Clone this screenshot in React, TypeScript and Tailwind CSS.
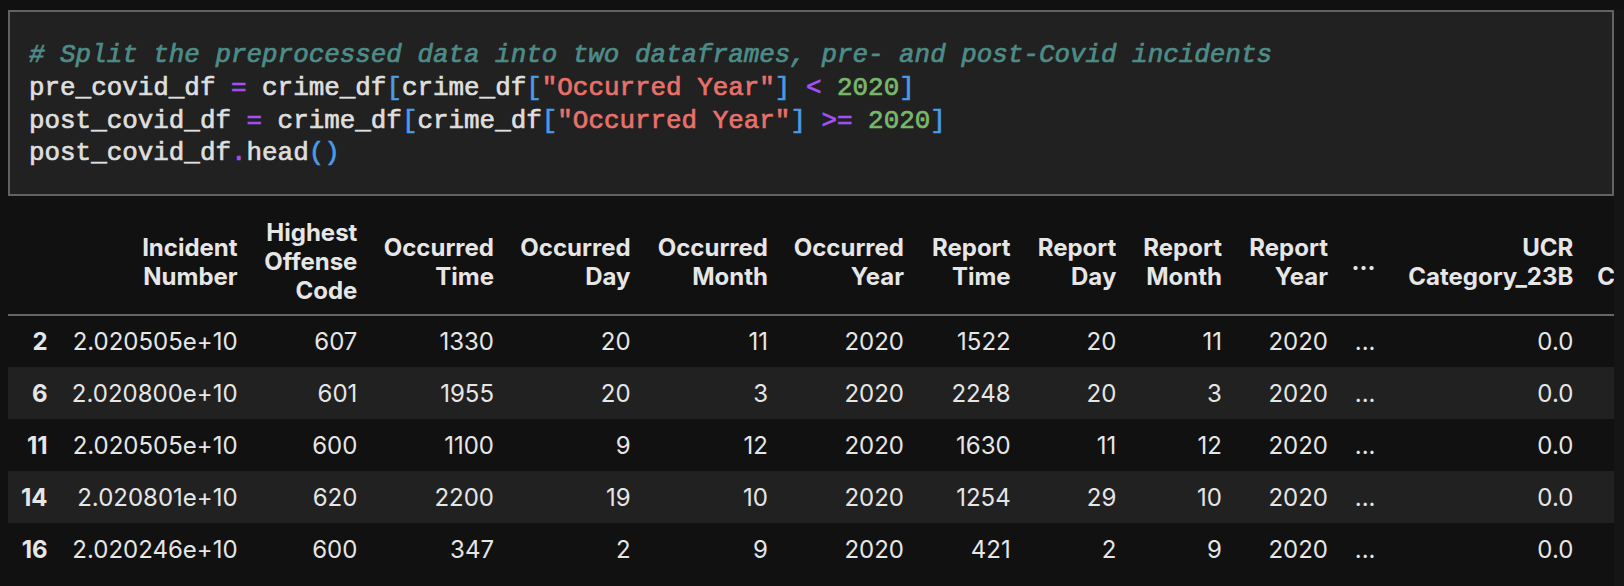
import React from "react"

const P = ({ children }: { children: React.ReactNode }) => (
  <span className="text-[#a450f2]">{children}</span>
)
const B = ({ children }: { children: React.ReactNode }) => (
  <span className="text-[#4b9be6]">{children}</span>
)
const S = ({ children }: { children: React.ReactNode }) => (
  <span className="text-[#e8716a]">{children}</span>
)
const N = ({ children }: { children: React.ReactNode }) => (
  <span className="text-[#79b86b]">{children}</span>
)

// column widths (px), cells are right aligned with 12px right padding
const widths = [51.6, 190, 119.8, 136.6, 136.6, 137.4, 136, 106.7, 105.7, 105.6, 106, 47.6, 197.8, 195]

const headers: string[][] = [
  [],
  ["Incident", "Number"],
  ["Highest", "Offense", "Code"],
  ["Occurred", "Time"],
  ["Occurred", "Day"],
  ["Occurred", "Month"],
  ["Occurred", "Year"],
  ["Report", "Time"],
  ["Report", "Day"],
  ["Report", "Month"],
  ["Report", "Year"],
  ["..."],
  ["UCR", "Category_23B"],
]

const rows: string[][] = [
  ["2", "2.020505e+10", "607", "1330", "20", "11", "2020", "1522", "20", "11", "2020", "...", "0.0", "0.0"],
  ["6", "2.020800e+10", "601", "1955", "20", "3", "2020", "2248", "20", "3", "2020", "...", "0.0", "0.0"],
  ["11", "2.020505e+10", "600", "1100", "9", "12", "2020", "1630", "11", "12", "2020", "...", "0.0", "0.0"],
  ["14", "2.020801e+10", "620", "2200", "19", "10", "2020", "1254", "29", "10", "2020", "...", "0.0", "0.0"],
  ["16", "2.020246e+10", "600", "347", "2", "9", "2020", "421", "2", "9", "2020", "...", "0.0", "0.0"],
]

export default function App() {
  return (
    <div className="flex h-[586px] w-[1624px] overflow-hidden bg-[#111111]">
      <div className="flex w-[1614px] shrink-0 flex-col pl-[8px] pt-[10px]">
        {/* Code cell */}
        <div className="h-[186px] w-[1606px] shrink-0 border-2 border-[#626262] bg-[#212121] pl-[19px] pt-[27px]">
          <pre
            className="whitespace-pre text-[25.9px] leading-[32.8px] text-[#dedede] [-webkit-text-stroke:0.7px_currentColor]"
            style={{ fontFamily: '"Liberation Mono", monospace' }}
          >
            <span className="italic text-[#4d8c88]">
              # Split the preprocessed data into two dataframes, pre- and post-Covid incidents
            </span>
            {"\n"}pre_covid_df <P>=</P> crime_df<B>[</B>crime_df<B>[</B>
            <S>"Occurred Year"</S>
            <B>]</B> <P>&lt;</P> <N>2020</N>
            <B>]</B>
            {"\n"}post_covid_df <P>=</P> crime_df<B>[</B>crime_df<B>[</B>
            <S>"Occurred Year"</S>
            <B>]</B> <P>&gt;=</P> <N>2020</N>
            <B>]</B>
            {"\n"}post_covid_df<P>.</P>head<B>()</B>
          </pre>
        </div>

        {/* Dataframe output, clipped at the cell's right edge */}
        <div
          className="mt-[13px] w-[1606px] shrink-0 overflow-hidden text-[24px] text-[#e6e6e6]"
          style={{ fontFamily: "Inter, 'Noto Sans', sans-serif" }}
        >
          <table className="table-fixed border-collapse" style={{ width: widths.reduce((a, b) => a + b, 0) }}>
            <colgroup>
              {widths.map((w, i) => (
                <col key={i} style={{ width: w }} />
              ))}
            </colgroup>
            <thead>
              <tr className="h-[106px] border-b-2 border-[#666666]">
                {headers.map((lines, i) => (
                  <th
                    key={i}
                    className="whitespace-nowrap pr-[12px] text-right align-middle font-bold leading-[29px]"
                  >
                    {lines.map((l, j) => (
                      <div key={j}>{l}</div>
                    ))}
                  </th>
                ))}
                {/* next column, cut off by the output edge */}
                <th className="whitespace-nowrap pl-[12px] align-middle font-bold leading-[29px]">
                  <div className="text-right">UCR</div>
                  <div className="text-left">Category_23C</div>
                </th>
              </tr>
            </thead>
            <tbody>
              {rows.map((r, i) => (
                <tr key={i} className={`h-[52px] ${i % 2 === 1 ? "bg-[#212121]" : ""}`}>
                  {r.map((c, j) => (
                    <td
                      key={j}
                      className={`whitespace-nowrap pr-[12px] text-right align-middle leading-[29px] ${j === 0 ? "font-bold" : ""}`}
                    >
                      {c}
                    </td>
                  ))}
                </tr>
              ))}
            </tbody>
          </table>
        </div>
      </div>
      {/* scroll gutter */}
      <div className="mt-[10px] w-[10px] shrink-0 bg-[#151515]" />
    </div>
  )
}
